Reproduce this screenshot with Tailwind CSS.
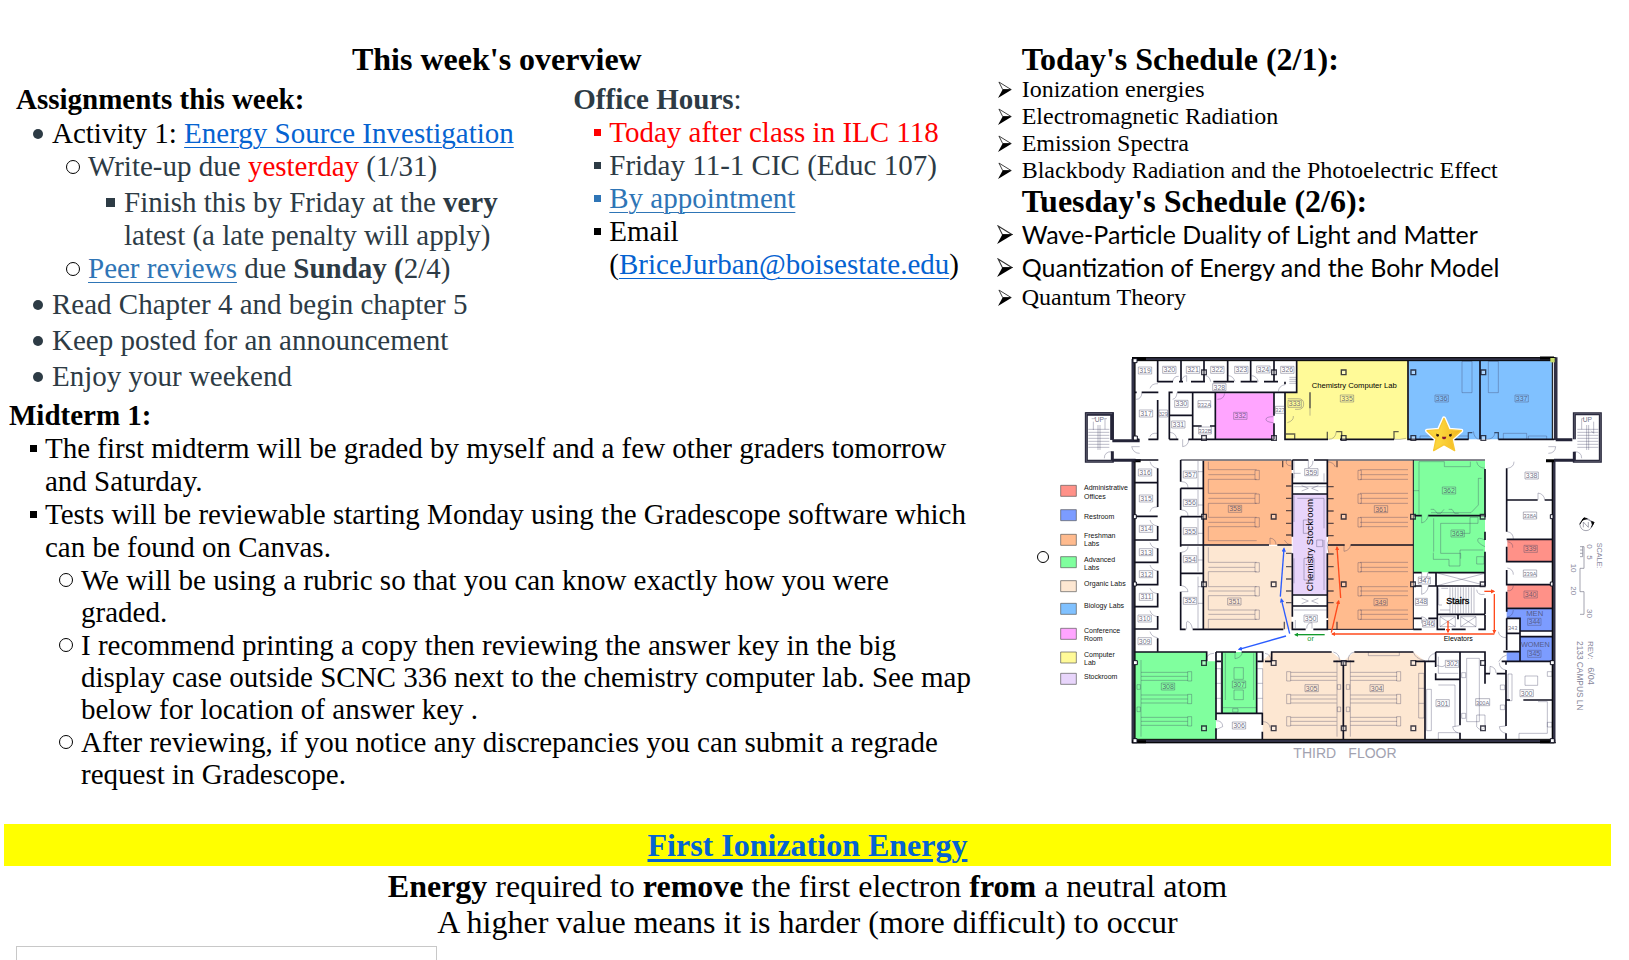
<!DOCTYPE html>
<html lang="en">
<head>
<meta charset="utf-8">
<title>This week's overview</title>
<script src="https://cdn.jsdelivr.net/npm/@tailwindcss/browser@4"></script>
</head>
<body class="flex min-h-screen flex-col bg-white font-['Liberation_Serif',serif] text-[29px] leading-[33px] text-black">
<svg class="hidden">
  <symbol id="arrow" viewBox="0 0 15 18">
    <path d="M1 1 14 9H5z" fill="#fff" stroke="#333" stroke-width="1"/>
    <path d="M5 9h10L0 18z" fill="#000"/>
  </symbol>
</svg>

<main class="flex items-start pt-[39px]">
  <section class="w-[61%] shrink-0">
    <h1 class="text-center text-[32px] leading-10 font-bold">This week's overview</h1>
    <div class="mt-1 flex pl-4 text-[#2d3b45]">
      <div class="w-[57%] pr-8">
        <h2 class="font-bold text-black">Assignments this week:</h2>
        <ul class="mt-px flex flex-col gap-[3px] pl-2">
          <li class="flex">
            <span class="flex h-[33px] w-7 shrink-0 items-center justify-center"><i class="size-[10px] rounded-full bg-[#2d3b45]"></i></span>
            <div>
              <p class="text-black">Activity 1: <a href="#" class="text-[#0563d1] underline decoration-1 underline-offset-4">Energy Source Investigation</a></p>
              <ul class="pl-[6px]">
                <li class="flex">
                  <span class="flex h-[33px] w-[30px] shrink-0 items-center justify-center"><i class="size-[14px] rounded-full border border-black"></i></span>
                  <div>
                    <p>Write-up due <span class="text-[#ff0000]">yesterday</span> (1/31)</p>
                    <ul class="mt-[3px] pl-2">
                      <li class="flex">
                        <span class="flex h-[33px] w-7 shrink-0 items-center justify-center"><i class="size-[9px] bg-[#2d3b45]"></i></span>
                        <p>Finish this by Friday at the <b>very</b> latest (a late penalty will apply)</p>
                      </li>
                    </ul>
                  </div>
                </li>
                <li class="flex">
                  <span class="flex h-[33px] w-[30px] shrink-0 items-center justify-center"><i class="size-[14px] rounded-full border border-black"></i></span>
                  <p><a href="#" class="text-[#2e75b6] underline decoration-1 underline-offset-4">Peer reviews</a> due <b>Sunday (</b>2/4)</p>
                </li>
              </ul>
            </div>
          </li>
          <li class="flex">
            <span class="flex h-[33px] w-7 shrink-0 items-center justify-center"><i class="size-[10px] rounded-full bg-[#2d3b45]"></i></span>
            <p>Read Chapter 4 and begin chapter 5</p>
          </li>
          <li class="flex">
            <span class="flex h-[33px] w-7 shrink-0 items-center justify-center"><i class="size-[10px] rounded-full bg-[#2d3b45]"></i></span>
            <p>Keep posted for an announcement</p>
          </li>
          <li class="flex">
            <span class="flex h-[33px] w-7 shrink-0 items-center justify-center"><i class="size-[10px] rounded-full bg-[#2d3b45]"></i></span>
            <p>Enjoy your weekend</p>
          </li>
        </ul>
      </div>
      <div class="flex-1">
        <h2><b>Office Hours</b>:</h2>
        <ul class="pl-3">
          <li class="flex text-[#ff0000]">
            <span class="flex h-[33px] w-6 shrink-0 items-center justify-center"><i class="size-[7px] bg-[#ff0000]"></i></span>
            <p>Today after class in ILC 118</p>
          </li>
          <li class="flex">
            <span class="flex h-[33px] w-6 shrink-0 items-center justify-center"><i class="size-[7px] bg-[#2d3b45]"></i></span>
            <p>Friday 11-1 CIC (Educ 107)</p>
          </li>
          <li class="flex text-[#2e75b6]">
            <span class="flex h-[33px] w-6 shrink-0 items-center justify-center"><i class="size-[7px] bg-[#2e75b6]"></i></span>
            <a href="#" class="underline decoration-1 underline-offset-4">By appointment</a>
          </li>
          <li class="flex text-black">
            <span class="flex h-[33px] w-6 shrink-0 items-center justify-center"><i class="size-[7px] bg-black"></i></span>
            <p>Email (<a href="#" class="text-[#0563d1] underline decoration-1 underline-offset-4">BriceJurban@boisestate.edu</a>)</p>
          </li>
        </ul>
      </div>
    </div>

    <div class="mt-[6px] pr-4 pl-[9px]">
      <h2 class="font-bold">Midterm 1:</h2>
      <ul class="pl-3">
        <li class="flex">
          <span class="flex h-[33px] w-6 shrink-0 items-center justify-center"><i class="size-[7px] bg-black"></i></span>
          <p>The first midterm will be graded by myself and a few other graders tomorrow and Saturday.</p>
        </li>
        <li class="flex">
          <span class="flex h-[33px] w-6 shrink-0 items-center justify-center"><i class="size-[7px] bg-black"></i></span>
          <div>
            <p>Tests will be reviewable starting Monday using the Gradescope software which can be found on Canvas.</p>
            <ul class="flex flex-col gap-px pl-[6px] leading-8">
              <li class="flex">
                <span class="flex h-8 w-[30px] shrink-0 items-center justify-center"><i class="size-[14px] rounded-full border border-black"></i></span>
                <p>We will be using a rubric so that you can know exactly how you were graded.</p>
              </li>
              <li class="flex">
                <span class="flex h-8 w-[30px] shrink-0 items-center justify-center"><i class="size-[14px] rounded-full border border-black"></i></span>
                <p>I recommend printing a copy then reviewing the answer key in the big display case outside SCNC 336 next to the chemistry computer lab. See map below for location of answer key .</p>
              </li>
              <li class="flex">
                <span class="flex h-8 w-[30px] shrink-0 items-center justify-center"><i class="size-[14px] rounded-full border border-black"></i></span>
                <p>After reviewing, if you notice any discrepancies you can submit a regrade request in Gradescope.</p>
              </li>
            </ul>
          </div>
        </li>
      </ul>
    </div>
  </section>

  <section class="flex-1 pt-[3px]">
    <h2 class="pl-7 text-[32px] leading-[34px] font-bold">Today's Schedule (2/1):</h2>
    <ul class="text-2xl leading-[27px]">
      <li class="flex items-center"><span class="flex w-7 shrink-0 pl-1"><svg class="h-[17px] w-[14px]"><use href="#arrow"/></svg></span>Ionization energies</li>
      <li class="flex items-center"><span class="flex w-7 shrink-0 pl-1"><svg class="h-[17px] w-[14px]"><use href="#arrow"/></svg></span>Electromagnetic Radiation</li>
      <li class="flex items-center"><span class="flex w-7 shrink-0 pl-1"><svg class="h-[17px] w-[14px]"><use href="#arrow"/></svg></span>Emission Spectra</li>
      <li class="flex items-center"><span class="flex w-7 shrink-0 pl-1"><svg class="h-[17px] w-[14px]"><use href="#arrow"/></svg></span>Blackbody Radiation and the Photoelectric Effect</li>
    </ul>
    <h2 class="pl-7 text-[32px] leading-[34px] font-bold">Tuesday's Schedule (2/6):</h2>
    <ul>
      <li class="flex items-center font-[Lato,sans-serif] text-[25px] leading-[33px]"><span class="flex w-7 shrink-0 pl-[3px]"><svg class="h-[19px] w-4"><use href="#arrow"/></svg></span>Wave-Particle Duality of Light and Matter</li>
      <li class="flex items-center font-[Lato,sans-serif] text-[25px] leading-[33px]"><span class="flex w-7 shrink-0 pl-[3px]"><svg class="h-[19px] w-4"><use href="#arrow"/></svg></span>Quantization of Energy and the Bohr Model</li>
      <li class="flex items-center text-2xl leading-[27px]"><span class="flex w-7 shrink-0 pl-1"><svg class="h-[17px] w-[14px]"><use href="#arrow"/></svg></span>Quantum Theory</li>
    </ul>
    <ul class="mt-[34px] pl-9">
      <li class="flex items-center">
        <span class="flex w-[26px] shrink-0 justify-center"><i class="size-3 rounded-full border border-black"></i></span>
        <svg class="h-auto w-full max-w-[554px]" viewBox="48 15 1662 1272" font-family="Liberation Sans, sans-serif" role="img" aria-label="Third floor map">
          <defs>
            <marker id="ab" viewBox="0 0 10 10" refX="7" refY="5" markerWidth="13" markerHeight="13" markerUnits="userSpaceOnUse" orient="auto"><path d="M0 0 10 5 0 10z" fill="#2a5cff"/></marker>
            <marker id="ar" viewBox="0 0 10 10" refX="7" refY="5" markerWidth="13" markerHeight="13" markerUnits="userSpaceOnUse" orient="auto"><path d="M0 0 10 5 0 10z" fill="#ff4a1c"/></marker>
            <marker id="ag" viewBox="0 0 10 10" refX="7" refY="5" markerWidth="13" markerHeight="13" markerUnits="userSpaceOnUse" orient="auto"><path d="M0 0 10 5 0 10z" fill="#129a2c"/></marker>
            <linearGradient id="gold" x1="0" x2="1"><stop offset="0.4" stop-color="#fbd43c"/><stop offset="1" stop-color="#f2b41c"/></linearGradient>
          </defs>

          <!-- room colours -->
          <path fill="#fffa98" d="M770 62h334v236H735V157h35z"/>
          <path fill="#80c1ff" d="M1105 62h432v236h-432z"/>
          <path fill="#ffa5ff" d="M528 160h173v136H528z"/>
          <path fill="#ffbb8e" d="M492 362h263v252H492zM864 362h256v506H864z"/>
          <path fill="#fde7d2" d="M492 618h263v250H492zM668 962l28-26h179l35 28 33-28h177l35 28v234H668z"/>
          <path fill="#e8d5fb" d="M758 462h102v301H758z"/>
          <path fill="#80ff9e" d="M1120 362h215v335h-215zM280 936h220v28h28v234H280zM546 936h104v184H546z"/>
          <path fill="#ff9188" d="M1402 598h135v66h-135zM1402 734h135v69h-135z"/>
          <path fill="#7c9cff" d="M1400 805h137v68h-97v-38h-40zM1440 890h97v74h-137v-28h40z"/>

          <!-- benches, fixtures and doors -->
          <g fill="none" stroke="#39395c" stroke-opacity=".5" stroke-width="2">
            <path d="M505 365v24h145M505 418h145M505 418v42h145M650 490H505v42h145M650 560H505v42h145M505 404h140M505 475h140M505 547h140M645 391h13v28h-13zM645 462h13v28h-13zM645 533h13v28h-13z"/>
            <path d="M650 667H505v-45M650 695H505v45h145M650 767H505v43h145M650 838H505v27M505 682h140M505 753h140M505 823h140M645 668h13v28h-13zM645 740h13v28h-13zM645 810h13v28h-13z"/>
            <path d="M1104 389H960M1104 418H960M1104 460H960M1104 490H960M1104 532H960M1104 560H960M1104 404H960M1104 475H960M1104 547H960M954 391h10v28h-10zM954 462h10v28h-10zM954 533h10v28h-10z"/>
            <path d="M1104 667H960M1104 695H960M1104 740H960M1104 767H960M1104 810H960M1104 838H960M1104 682H960M1104 753H960M1104 823H960M954 668h10v28h-10zM954 740h10v28h-10zM954 810h10v28h-10z"/>
            <path d="M303 960v230M303 997h140M303 1009h140M303 1021h140M303 1065h140M303 1077h140M303 1089h140M303 1132h140M303 1144h140M303 1156h140M443 995h12v28h-12zM443 1063h12v28h-12zM443 1130h12v28h-12zM291 1034h10v14h-10zM291 1101h10v14h-10z"/>
            <path d="M890 997H752M890 1009H752M890 1021H752M890 1065H752M890 1077H752M890 1089H752M890 1132H752M890 1144H752M890 1156H752M740 995h12v28h-12zM740 1063h12v28h-12zM740 1130h12v28h-12zM891 960v230M892 1034h10v14h-10zM892 1101h10v14h-10z"/>
            <path d="M931 960v230M931 997h140M931 1009h140M931 1021h140M931 1065h140M931 1077h140M931 1089h140M931 1132h140M931 1144h140M931 1156h140M1070 995h12v28h-12zM1070 1063h12v28h-12zM1070 1130h12v28h-12zM919 1034h10v14h-10zM919 1101h10v14h-10z"/>
            <path d="M1136 1000h16v134h-16zM1136 1045h16M1136 1090h16M525 986h18v130M525 1030h18M525 1075h18M652 986h16v130M652 1030h16M652 1075h16M985 936v11h93v-11"/>
            <path d="M556 940v140M641 940v140M582 983h28v35h-28zM582 1050h28v29h-28zM548 1103h100M578 1106h16v10h-16z"/>
            <path d="M1266 64h30v94h-30zM1345 64h30v94h-30zM1140 298v-10h145M1390 298v-18h70v18M1465 298v-10h55v10"/>
            <path d="M1137 524V365h76v15h78v-15M1325 415h-10v80l-22 23h-120M1172 508h10l10 12h10l10-12M1226 508h10l8 12h12M1120 452h17M1330 630h-70v48h-33v-20h-47v-20M1202 550v90h60v16M1202 550h88v30h-30M1181 535v100M1290 532h24v18h-24zM1310 650h22v22h-22z"/>
            <path d="M762 466v80M772 475h80v90M762 655v75M852 600v150M790 540h16v40h-16zM792 655h30v65h-30zM830 600h18v20h-18z"/>
            <path d="M761 440h99M785 437l20 8-20 8M835 437l-20 8 20 8M785 775l20 8-20 8M835 775l-20 8 20 8M762 415v-52M762 400h20M852 400v25M762 810h98M766 840v25"/>
            <path d="M743 176h32q16 0 16 16t-16 16h-10M810 157v70M1195 700l140 36M1195 736l140-36M1200 830h46v30h-46zM1200 830l46 30M1246 830l-46 30M1262 830h46v30h-46zM1262 830l46 30M1308 830l-46 30"/>
            <path d="M1196 745v50h10M1204 745h20M1230 742v78M1238 742v78M1246 742v78M1254 742v78M1262 742v78M1270 742v78M1278 742v78M1286 742v78M1294 742v78M1302 742v78M1200 810h30"/>
            <path d="M1280 955h38v190h-38zM1265 998h12v15h-12zM1265 1120h12v15h-12zM1310 1125h25v35q-12 18-25 0zM1381 1035h13v14h-13zM1381 1095h13v14h-13zM1455 1008h38v28h-38zM1404 1002h12v80h-12zM1522 995h14v14h-14zM1522 1147h14v14h-14zM1195 1035h50v125M1160 1048h14v124h-14zM1195 950v50h60M1195 1198v-20h60M1437 1198v-18h85v-95h-28"/>
            <path d="M145 268h63M145 277h63M145 286h63M145 295h63M145 304h63M145 313h63M145 322h63M174 255v75M180 255v75M160 245v25M195 268v-32M155 236h10v-5M193 236h8"/>
            <path d="M1612 268h63M1612 277h63M1612 286h63M1612 295h63M1612 304h63M1612 313h63M1612 322h63M1640 255v75M1646 255v75M1625 268v-32h8M1661 245v35l-8-8"/>
            <path d="M748 112h20M748 118h20M748 124h20M748 130h20M474 363v80M474 450v75M474 535v78M474 620v75M474 710v155M474 395h16M474 495h16M474 580h16M474 660h16M474 740h16M474 790h16"/>
            <!-- door swings -->
            <path d="M330 145q5-15 24-14M288 178q16 0 18-20M330 290q3-12 23-10M398 125q3-17 18-16M440 125v-18q-14 2-16 18M512 125q-3-17-16-18M585 125q-5-17-20-18M655 125q-5-17-20-18M715 154q2-17 20-20M398 178q12-3 13-20M410 297q-2-18-20-20M428 298v22q18-3 18-22M532 178q20 0 22-18M700 230q-22 0-22 8t22 10M742 248q20-6 18-20M275 320q5 20 24 20M275 320h24M193 355q0-20 22-20M1525 340q20 0 22-20h-22M1625 355q0-20-22-20"/>
            <path d="M330 365q5 18 23 20M330 515q3-15 23-14M330 540q5 16 23 18M330 608q5 16 23 18M330 675q5 16 23 18M330 745q5 14 23 16M330 812q5 16 23 18M330 875q5 16 23 18M424 425q20 0 20 18M424 510q20 0 20 18M424 637q20-2 20-18M424 755h20q-2-16-20-18M440 868q-2-24 2-24 12 3 15 22M690 614v-20q18 3 18 20M740 360q-6 16 14 18M733 600q6 14 24 16M867 600q-10 14 0 38M912 614v20q18-3 20-20M805 360v24q14-5 14-22M800 866q0-18 16-18v18"/>
            <path d="M498 964q0-24 24-24M585 936v20q20-3 22-20M675 940q18 3 17 22M880 936q20 5 18 26M943 936q-20 5-18 26M1120 936q5 20 35 26M1165 965q0-22 22-25M1350 1001v-22q18 3 18 20M1398 990q-20-3-20-22M1376 965q8-16 24-20M1398 1180q-18-3-20-20l20-2M1260 1180q-20-3-22-20l20-3M528 1142q20 0 20 18l-18 8M668 1145q20 0 22 18M1190 975q20 10 24 0"/>
            <path d="M862 365q20 2 24 16M865 298q22 0 24-24M1060 298q20 2 38-3M1300 274q3 24 20 24M1340 298q22 0 25-20M1335 385q-22-2-25-20M1335 620q-22-10-22-20t22 0M1402 385q20-3 20-20M1494 479v-20q18 3 20 20M1402 575q18 3 18 22M1402 605q18 3 16 18M1402 684q18 3 18 20M1402 752q16 3 18-15M1375 875q3 18 24 18M1402 830q16 0 18-20M1145 524v25q18-5 20-25M1145 698v25q18-5 18-25M1145 738v25q18-5 20-25M1145 850v-20q18 3 18 20M1310 749q2 18 24 14"/>
          </g>

          <!-- walls -->
          <g fill="none" stroke="#101020">
            <path stroke-width="11" stroke="#303045" d="M276 57h1271v243M280 57v242M280 360v844h1267M1541 360v844M136 222h80v78"/>
            <path stroke-width="3" stroke="#000" d="M276 53h1271M276 1208h1271M285 62v236M285 62h1252M285 365v833h1252V365M1537 62v236"/>
            <path stroke-width="9" stroke="#000" d="M276 56h42M1500 54h42M276 1205h42M1500 1205h42M278 362h24M1518 362h25"/>
            <path stroke-width="9" stroke="#242438" d="M217 297v-76h-78v143h78v-30M217 302h82M217 361h70M1603 335v29h78V221h-78v77M1547 299h50M1542 361h60"/>
            <path stroke-width="1" stroke="#b8b8c8" d="M217 221h-78v143h78M1603 364h78V221h-78v77"/>
            <path stroke-width="5" d="M353 62v65M353 180v118M423 62v63M492 62v63M563 62v63M632 62v63M702 62v63M770 62v95h-35M353 125h46M417 125h12M453 125h42M520 125h62M602 125h50M672 125h42M735 125v8M284 157h6M305 157h50M388 298V157h10M412 157h323M458 157v140M526 157v141M388 226h70M458 258h27M510 258h16M388 298h27M445 298h257M702 157v70M702 250v48M735 157v141h129M900 298h162M1104 62v236h182M1320 62v236M1375 298h168M284 298h14M325 298h30"/>
            <path stroke-width="5" d="M284 360h71M353 385v116M353 529h-69M353 428h-69M353 558v42h-69M353 625v42h-69M353 692v42h-69M353 760v40h-69M353 828v39h-69M353 895v40M422 360v65M422 445h68M422 445v65M422 530h68M422 530v90M490 362v506M422 615h68M422 637v63h68M422 700v38M422 755v113h15M458 868h272M492 615h195M712 615h43M757 360v30M757 400v190M757 640v190M757 845v23h40M820 868h42v-28M862 430v160M862 640v195M862 385v45H757M757 462h105M757 765h105M757 798h105M757 360h48M822 360h40v25"/>
            <path stroke-width="3" d="M422 360h332M864 360h471M1120 360v508M864 868h257"/>
            <path stroke-width="5" d="M864 615h50M932 615h188M1120 527h25M1165 527h170M1335 387v145M1335 575v25M1335 635v104M1120 698h25M1165 698h170M1188 698v40M1120 738h25M1165 738h170M1192 738v130h23M1192 823h143M1335 775v48M1254 823v15M1335 825v43h-20M1235 868h42M1120 835h25M1165 835h25M1120 868h25"/>
            <path stroke-width="5" d="M1400 385v95h93M1514 480h23M1400 480v95M1400 598h137M1400 620v45h137M1400 690v44h137M1400 755v50h137M1400 835h40v38h97M1400 835v95M1440 873v62h-50M1440 890h97M1440 935v29M1385 964h152M1400 880h40M1400 805v10"/>
            <path stroke-width="5" d="M284 936h216v28M528 936h60M605 936h63v28h-15M528 936v28h15M546 936v184M650 936v184M528 1120h139v35M528 964v176M528 1165v33M667 1175v23M695 964v-28h180M675 964h20M880 964h63M910 964v234M943 936h177M1125 964h60M1155 964v234M1187 936h148v95M1187 936v45M1187 1000v18h73M1260 936v220M1260 1178v20M1335 1001h15M1370 1001h28M1398 990v168M1398 1180v18M1398 1080h12M1450 1080h87M1398 964v10"/>
            <path stroke-width="4" stroke-opacity=".65" d="M738 438h17M738 475h17M738 512h17M738 550h17M738 585h17M738 640h17M738 680h17M738 717h17M738 753h17M738 788h17M728 362v20M733 845v23M864 440h17M864 476h17M864 513h17M864 550h17M864 587h17M864 642h17M864 680h17M864 717h17M864 753h17M864 788h17M891 362v20M891 845v23M862 298v-23M905 298v-23h-16M1062 298v-23h14M1285 298v-20h12M1375 298v-20h-12M810 157v48M738 282h26v16"/>
            <path stroke-width="4" stroke-opacity=".8" fill="#fff" fill-opacity=".35" d="M485 90h14v14h-14zM695 90h14v14h-14zM485 287h14v14h-14zM695 287h14v14h-14zM904 90h14v14h-14zM904 287h14v14h-14zM1113 90h14v14h-14zM1113 287h14v14h-14zM1323 90h14v14h-14zM1323 287h14v14h-14zM485 523h14v14h-14zM694 523h14v14h-14zM904 523h14v14h-14zM1112 523h14v14h-14zM1321 523h14v14h-14zM485 726h14v14h-14zM694 726h14v14h-14zM904 726h14v14h-14zM1112 726h14v14h-14zM1321 726h14v14h-14zM485 962h14v14h-14zM694 962h14v14h-14zM904 962h14v14h-14zM1113 962h14v14h-14zM1322 962h14v14h-14zM485 1158h14v14h-14zM694 1158h14v14h-14zM904 1158h14v14h-14zM1113 1158h14v14h-14zM1322 1158h14v14h-14z"/>
            <path stroke-width="3" fill="#fff" d="M279 56h12v12h-12zM280 288h12v12h-12zM280 524h9v12h-9zM280 726h9v12h-9zM280 962h12v12h-12zM279 1196h12v12h-12zM1531 962h12v12h-12zM1531 1196h12v12h-12zM1531 524h8v12h-8zM1531 726h8v12h-8z"/>
            <path stroke="none" fill="#c9e06a" d="M1531 54h13v13h-13z"/>
          </g>

          <!-- room numbers -->
          <g fill="#4a4a66" fill-opacity=".8" font-size="21" text-anchor="middle">
            <path fill="none" stroke="#4a4a66" stroke-opacity=".6" stroke-width="2" d="M295 81h40v21h-40zM368 79h40v21h-40zM439 79h40v21h-40zM512 79h40v21h-40zM584 79h40v21h-40zM650 78h40v21h-40zM722 79h40v21h-40zM518 131h40v21h-40zM298 210h40v21h-40zM357 210h26v21h-26zM404 181h40v21h-40zM474 182h38v21h-38zM395 243h40v21h-40zM476 261h38v21h-38zM581 217h40v21h-40zM706 199h28v21h-28zM744 181h40v21h-40zM901 165h40v21h-40zM1185 165h40v21h-40zM1425 165h40v21h-40zM794 386h40v21h-40zM295 387h40v21h-40zM430 393h40v21h-40zM298 465h40v21h-40zM430 478h40v21h-40zM565 496h40v21h-40zM298 556h40v21h-40zM430 563h40v21h-40zM298 626h40v21h-40zM430 647h40v21h-40zM298 692h40v21h-40zM298 760h40v21h-40zM430 772h40v21h-40zM563 774h40v21h-40zM294 825h40v21h-40zM294 893h40v21h-40zM792 825h40v21h-40zM1003 497h40v21h-40zM1207 441h40v21h-40zM1233 570h40v21h-40zM1455 396h40v21h-40zM1450 516h40v21h-40zM1452 616h40v21h-40zM1450 690h40v21h-40zM1452 753h40v21h-40zM1463 835h40v21h-40zM1463 931h40v21h-40zM1002 776h40v21h-40zM1135 711h36v21h-36zM1126 775h36v21h-36zM1148 840h36v21h-36zM364 1029h40v21h-40zM577 1023h40v21h-40zM577 1146h40v21h-40zM795 1034h40v21h-40zM990 1034h40v21h-40zM1188 1079h40v21h-40zM1216 961h40v21h-40zM1307 1076h42v21h-42zM1440 1049h40v21h-40z"/>
            <text x="315" y="99">319</text><text x="388" y="97">320</text><text x="459" y="97">321</text><text x="532" y="97">322</text><text x="604" y="97">323</text><text x="670" y="96">324</text><text x="742" y="97">326</text><text x="538" y="149">328</text><text x="318" y="228">317</text><text x="370" y="228" font-size="16">329</text><text x="424" y="199">330</text><text x="493" y="200" font-size="17">332A</text><text x="415" y="261">331</text><text x="495" y="279" font-size="17">332B</text><text x="601" y="235">332</text><text x="720" y="217" font-size="17">327</text><text x="764" y="199">333</text><text x="921" y="183">335</text><text x="1205" y="183">336</text><text x="1445" y="183">337</text>
            <text x="814" y="404">359</text><text x="315" y="405">316</text><text x="450" y="411">357</text><text x="318" y="483">315</text><text x="450" y="496">356</text><text x="585" y="514">358</text><text x="318" y="574">314</text><text x="450" y="581">355</text><text x="318" y="644">313</text><text x="450" y="665">354</text><text x="318" y="710">312</text><text x="318" y="778">311</text><text x="450" y="790">352</text><text x="583" y="792">351</text><text x="314" y="843">310</text><text x="314" y="911">309</text><text x="812" y="843">350</text>
            <text x="1023" y="515">361</text><text x="1227" y="459">362</text><text x="1253" y="588">363</text><text x="1475" y="414">338</text><text x="1470" y="534" font-size="17">338A</text><text x="1472" y="634">339</text><text x="1470" y="708" font-size="17">339A</text><text x="1472" y="771">340</text><text x="1483" y="853">344</text><text x="1418" y="870" font-size="17">343</text><text x="1483" y="949">345</text><text x="1022" y="794">349</text><text x="1153" y="729">347</text><text x="1144" y="793">348</text><text x="1166" y="858">346</text>
            <text x="384" y="1047">308</text><text x="597" y="1041">307</text><text x="597" y="1164">306</text><text x="815" y="1052">305</text><text x="1010" y="1052">304</text><text x="1208" y="1097">301</text><text x="1236" y="979">302</text><text x="1328" y="1094" font-size="17">300A</text><text x="1460" y="1067">300</text>
            <text x="1484" y="828" font-size="23">MEN</text><text x="1486" y="920" font-size="22">WOMEN</text><text x="178" y="245" font-size="20">UP</text><text x="1642" y="245" font-size="20">UP</text>
          </g>

          <!-- routes -->
          <g fill="none" stroke-width="4">
            <g stroke="#2a5cff"><path d="M738 888 597 928" marker-end="url(#ab)"/><path d="M749 881 724 778" marker-end="url(#ab)"/><path d="M721 770 732 626" marker-end="url(#ab)"/></g>
            <g stroke="#ff4a1c"><path d="M1333 754h29" marker-end="url(#ar)"/><path d="M1363 762v116" marker-end="url(#ar)"/><path d="M1363 882H877" marker-end="url(#ar)"/><path d="M874 878 896 783" marker-end="url(#ar)"/><path d="M902 774 891 622" marker-end="url(#ar)"/><path d="M1224 842v34" marker-end="url(#ar)"/></g>
            <path stroke="#129a2c" d="M854 884h-88" marker-end="url(#ag)"/>
          </g>
          <g fill="#000">
            <text x="815" y="143" font-size="23">Chemistry Computer Lab</text>
            <text transform="translate(819 754) rotate(-90)" font-size="29">Chemistry Stockroom</text>
            <text x="1219" y="793" font-size="27" stroke="#000" stroke-width="1">Stairs</text>
            <text x="1211" y="904" font-size="21">Elevators</text>
            <text x="802" y="904" font-size="22" fill="#129a2c">or</text>
          </g>

          <!-- star marking room 336 -->
          <path d="M1212 235 1227 269 1264 272 1236 297 1244 332 1212 314 1181 332 1188 297 1161 272 1197 269z" fill="url(#gold)" stroke="#fff" stroke-width="12" stroke-linejoin="round"/>
          <path d="M1212 235 1227 269 1264 272 1236 297 1244 332 1212 314 1181 332 1188 297 1161 272 1197 269z" fill="url(#gold)" stroke="#f8c832" stroke-width="4" stroke-linejoin="round"/>
          <path d="M1206 290h13q-1 8-7 8t-6-8z" fill="#8a1430"/>
          <circle cx="1193" cy="286" r="4" fill="#331a10"/><circle cx="1231" cy="286" r="4" fill="#331a10"/>
          <path d="M1188 282l5 2M1236 282l-5 2" stroke="#331a10" stroke-width="2"/>

          <!-- legend -->
          <g stroke="#555" stroke-width="2">
            <path fill="#ff9188" d="M62 436h47v33H62z"/><path fill="#7c9cff" d="M62 509h47v33H62z"/><path fill="#ffbb8e" d="M62 583h47v33H62z"/><path fill="#80ff9e" d="M62 650h47v33H62z"/><path fill="#fde7d2" d="M62 722h47v33H62z"/><path fill="#80c1ff" d="M62 790h47v33H62z"/><path fill="#ffa5ff" d="M62 865h47v33H62z"/><path fill="#fffa98" d="M62 936h47v33H62z"/><path fill="#e8d5fb" d="M62 1000h47v33H62z"/>
          </g>
          <g fill="#111" font-size="21">
            <text x="132" y="451">Administrative</text><text x="132" y="476">Offices</text><text x="132" y="536">Restroom</text><text x="132" y="594">Freshman</text><text x="132" y="617">Labs</text><text x="132" y="667">Advanced</text><text x="132" y="690">Labs</text><text x="132" y="737">Organic Labs</text><text x="132" y="803">Biology Labs</text><text x="132" y="880">Conference</text><text x="132" y="903">Room</text><text x="132" y="950">Computer</text><text x="132" y="975">Lab</text><text x="132" y="1016">Stockroom</text>
          </g>

          <!-- compass, scale and title -->
          <g fill="none" stroke="#77778a" stroke-width="2">
            <circle cx="1638" cy="554" r="18"/><path d="M1630 562v-16l15 16v-16"/>
            <path stroke="#000" stroke-width="3" d="M1619 553 1632 534M1662 547 1654 562"/>
            <path d="M1632 534l30 13"/>
            <path fill="#000" stroke="#000" d="M1626 541l6-8 10 3zM1654 544l8 3-4 8z"/>
            <path d="M1620 620h12v65h-12M1620 630h8M1620 640h8M1620 650h8M1620 685v70h12v68h-12M1628 620v30"/>
          </g>
          <g fill="#85859a" font-size="24">
            <text transform="translate(1670 608) rotate(90)" font-size="22">SCALE:</text>
            <text transform="translate(1642 613) rotate(90)">0</text><text transform="translate(1642 646) rotate(90)">5</text>
            <text transform="translate(1594 671) rotate(90)">10</text><text transform="translate(1594 739) rotate(90)">20</text><text transform="translate(1642 807) rotate(90)">30</text>
            <text transform="translate(1644 903) rotate(90)">REV:</text><text transform="translate(1644 982) rotate(90)" font-size="27">6/04</text>
            <text transform="translate(1610 903) rotate(90)" font-size="25">2133 CAMPUS LN</text>
          </g>
          <g fill="#a2a2b0" font-size="42"><text x="760" y="1255">THIRD</text><text x="925" y="1255">FLOOR</text></g>
        </svg>
      </li>
    </ul>
  </section>
</main>

<section class="mt-[34px] mr-[18px] ml-1 text-center text-[32px] leading-9">
  <h2 class="bg-[#ffff00] leading-[42px] font-bold"><a href="#" class="text-[#0563d1] underline decoration-3 underline-offset-3">First Ionization Energy</a></h2>
  <p class="mt-[2px]"><b>Energy</b> required to <b>remove</b> the first electron <b>from</b> a neutral atom</p>
  <p>A higher value means it is harder (more difficult) to occur</p>
</section>
<div class="mt-[6px] ml-4 w-[421px] flex-1 border border-b-0 border-[#c8c8c8]"></div>
</body>
</html>
